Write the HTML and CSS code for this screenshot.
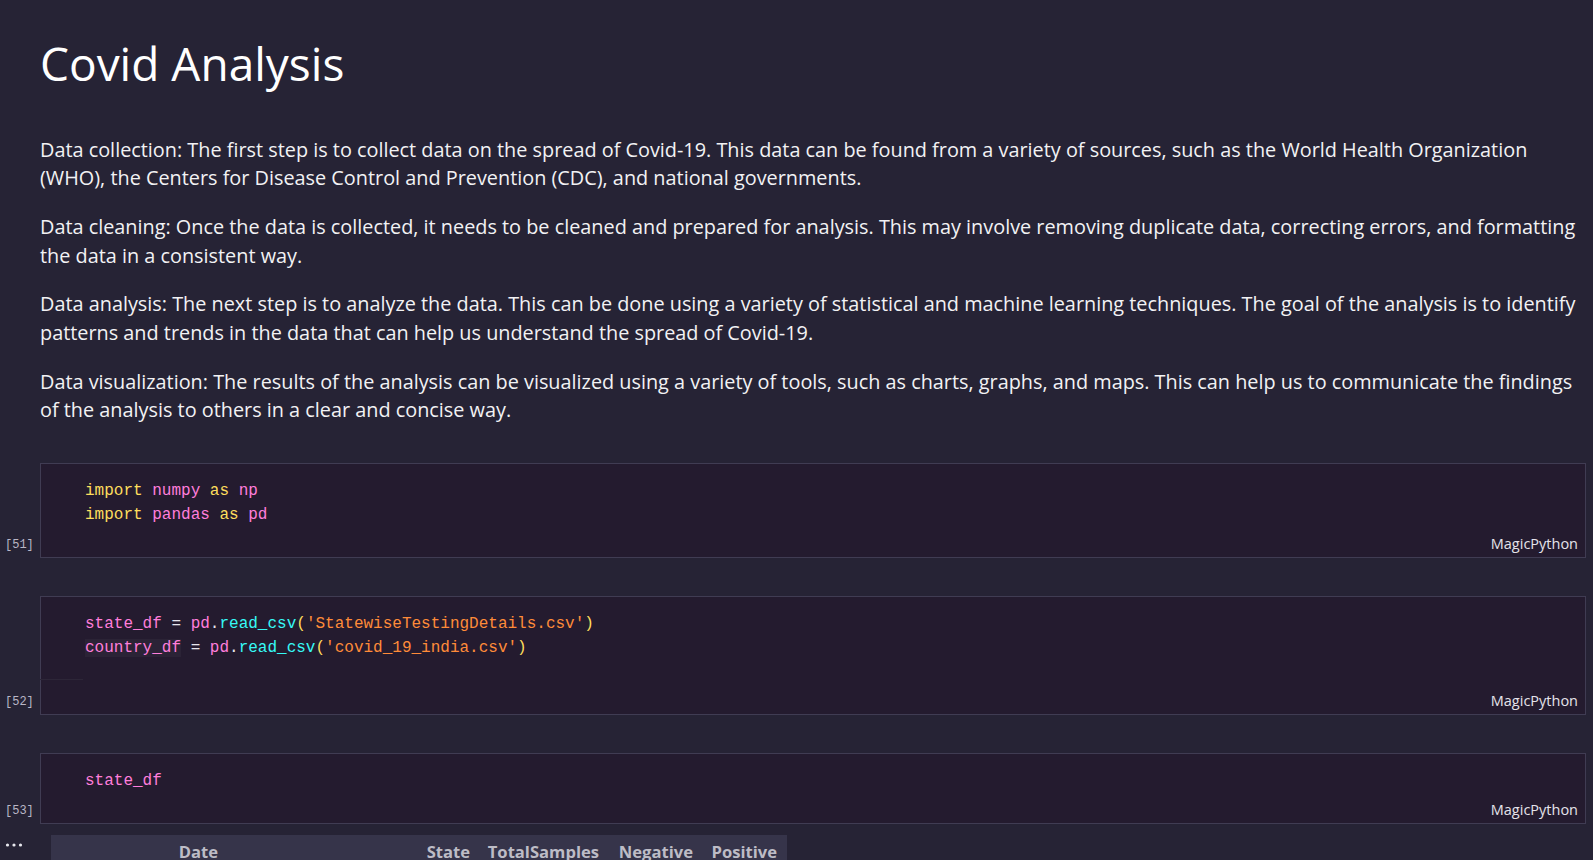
FILE: index.html
```html
<!DOCTYPE html>
<html lang="en">
<head>
<meta charset="utf-8">
<title>Covid Analysis</title>
<link rel="stylesheet" href="styles.css">
</head>
<body>
<div class="notebook">
  <section class="markdown">
    <h1 class="title">Covid Analysis</h1>
    <p>Data collection: The first step is to collect data on the spread of Covid-19. This data can be found from a variety of sources, such as the World Health Organization<br>(WHO), the Centers for Disease Control and Prevention (CDC), and national governments.</p>
    <p>Data cleaning: Once the data is collected, it needs to be cleaned and prepared for analysis. This may involve removing duplicate data, correcting errors, and formatting the data in a consistent way.</p>
    <p>Data analysis: The next step is to analyze the data. This can be done using a variety of statistical and machine learning techniques. The goal of the analysis is to identify patterns and trends in the data that can help us understand the spread of Covid-19.</p>
    <p>Data visualization: The results of the analysis can be visualized using a variety of tools, such as charts, graphs, and maps. This can help us to communicate the findings of the analysis to others in a clear and concise way.</p>
  </section>

  <section class="code-row">
    <div class="exec">[51]</div>
    <div class="cell">
      <pre class="code"><span class="kw">import</span> <span class="var">numpy</span> <span class="kw">as</span> <span class="var">np</span>
<span class="kw">import</span> <span class="var">pandas</span> <span class="kw">as</span> <span class="var">pd</span></pre>
      <div class="cell-foot"><span class="lang">MagicPython</span></div>
    </div>
  </section>

  <section class="code-row">
    <div class="exec">[52]</div>
    <div class="cell">
      <pre class="code"><span class="var">state_df</span> <span class="op">=</span> <span class="var">pd</span><span class="op">.</span><span class="fn">read_csv</span><span class="br">(</span><span class="str">'StatewiseTestingDetails.csv'</span><span class="br">)</span>
<span class="var hl">country_df</span> <span class="op">=</span> <span class="var">pd</span><span class="op">.</span><span class="fn">read_csv</span><span class="br">(</span><span class="str">'covid_19_india.csv'</span><span class="br">)</span>
<span class="blank"> </span></pre>
      <div class="cell-foot has-rule"><span class="lang">MagicPython</span></div>
    </div>
  </section>

  <section class="code-row">
    <div class="exec">[53]</div>
    <div class="cell">
      <pre class="code"><span class="var">state_df</span></pre>
      <div class="cell-foot"><span class="lang">MagicPython</span></div>
    </div>
  </section>

  <section class="output-row">
    <div class="more">
      <svg width="24" height="6" viewBox="0 0 24 6"><circle cx="7.5" cy="3" r="1.6" fill="#e8e8ee"/><circle cx="14" cy="3" r="1.6" fill="#e8e8ee"/><circle cx="20.5" cy="3" r="1.6" fill="#e8e8ee"/></svg>
    </div>
    <table class="df">
      <thead>
        <tr>
          <th class="c-idx"></th>
          <th class="c-date">Date</th>
          <th class="c-state">State</th>
          <th class="c-total">TotalSamples</th>
          <th class="c-neg">Negative</th>
          <th class="c-pos">Positive</th>
        </tr>
      </thead>
    </table>
  </section>
</div>
</body>
</html>
```

FILE: styles.css
```css
html, body {
  margin: 0;
  padding: 0;
  background: #262335;
  overflow: hidden;
}

body {
  font-family: "Open Sans", "Noto Sans", sans-serif;
  color: #f2f2f4;
}

.notebook {
  display: flex;
  flex-direction: column;
  padding: 31px 7px 0 0;
}

.markdown {
  padding-left: 40px;
  padding-bottom: 39px;
}

.title {
  margin: 0 0 41px 0;
  font-weight: 400;
  font-size: 46px;
  line-height: 64px;
  color: #ffffff;
}

.markdown p {
  margin: 0 0 20.4px 0;
  font-size: 19.85px;
  line-height: 28.4px;
}

.markdown p:last-child {
  margin-bottom: 0;
}

.code-row {
  display: flex;
  margin-bottom: 38px;
}

.exec {
  width: 40px;
  flex: none;
  display: flex;
  align-items: flex-end;
  box-sizing: border-box;
  padding: 0 0 6px 5px;
  font-family: "Liberation Mono", monospace;
  font-size: 12px;
  line-height: 14px;
  color: #b9b6c6;
}

.cell {
  flex: 1;
  background: #241b2f;
  border: 1px solid #403c53;
  display: flex;
  flex-direction: column;
}

.code {
  margin: 0;
  padding: 15px 0 0 44px;
  font-family: "Liberation Mono", monospace;
  font-size: 16px;
  line-height: 24px;
  color: #f0eff3;
}

.kw { color: #fede5d; }
.var { color: #ff7edb; }
.fn { color: #36f9f6; }
.str { color: #ff8b39; }
.br { color: #fede5d; }
.op { color: #e6e4ec; }
.hl { background: rgba(255, 255, 255, 0.035); }

.cell-foot {
  height: 30px;
  display: flex;
  justify-content: flex-end;
  align-items: flex-end;
  padding: 0 7px 5px 0;
  box-sizing: border-box;
  position: relative;
}

.has-rule::before {
  content: "";
  position: absolute;
  left: -1px;
  top: -5px;
  width: 43px;
  height: 1px;
  background: #2d2638;
}

.lang {
  font-size: 14.5px;
  line-height: 16px;
  color: #e4e3ea;
}

.output-row {
  display: flex;
  margin-top: -27px;
}

.more {
  width: 51px;
  flex: none;
  padding-top: 7px;
}

.more svg {
  display: block;
}

.df {
  border-collapse: collapse;
  background: #36344a;
}

.df th {
  height: 36px;
  padding: 3px 10px 0 0;
  vertical-align: top;
  text-align: right;
  font-size: 16.6px;
  line-height: 28px;
  font-weight: 700;
  color: #bdbcc6;
  box-sizing: border-box;
}

.c-idx { width: 79px; }
.c-date { width: 98px; }
.c-state { width: 252px; }
.c-total { width: 129px; }
.c-neg { width: 94px; }
.c-pos { width: 84px; }
```
